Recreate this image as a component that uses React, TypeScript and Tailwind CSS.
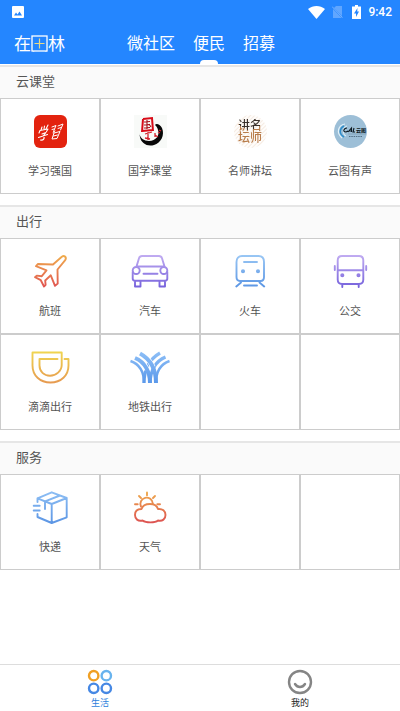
import type { ReactNode } from "react";

type Item = { label: string; icon: ReactNode };
type Section = { title: string; items: Item[] };

function LineIcon({ id, from, to, children }: { id: string; from: string; to: string; children: ReactNode }) {
  return (
    <svg
      viewBox="0 0 40 34"
      className="h-[34px] w-10"
      fill="none"
      stroke={`url(#${id})`}
      strokeWidth="1.9"
      strokeLinecap="round"
      strokeLinejoin="round"
      aria-hidden="true"
    >
      <defs>
        <linearGradient id={id} gradientUnits="userSpaceOnUse" x1="0" y1="0" x2="0" y2="34">
          <stop offset="0" stopColor={from} />
          <stop offset="1" stopColor={to} />
        </linearGradient>
      </defs>
      {children}
    </svg>
  );
}

const cjk = "'Noto Sans CJK SC', sans-serif";

const sections: Section[] = [
  {
    title: "云课堂",
    items: [
      {
        label: "学习强国",
        icon: (
          <svg viewBox="0 0 40 34" className="h-[34px] w-10" aria-hidden="true">
            <rect x="4" y="1" width="33" height="33" rx="6" fill="#e3230f" />
            <g fill="none" stroke="#fff" strokeLinecap="round" strokeLinejoin="round">
              <path strokeWidth="1.1" d="M12 13l-1 3M14.500 12l-.5 3M18 11l-2 4M9 19l1-2.500 8-1.500-1.500 2.500M12 20l4-1.500-2.500 3M8.500 23.500l9-3M13.500 21.500c1.500 3 0 5-3 4.500" />
              <path strokeWidth="1" d="M22 13l4-1.500-2.500 6M22 15.500l2-.5M28 12l5-2-2.500 6M28 14.500l3-1M25 17l-2 1.500M24 19l6-1.500-3 7-5 .5 2-6M23.500 22l4-1" />
            </g>
          </svg>
        ),
      },
      {
        label: "国学课堂",
        icon: (
          <svg viewBox="0 0 40 34" className="h-[34px] w-10" fill="none" aria-hidden="true">
            <rect x="4" y="1" width="33" height="33" fill="#f8faf8" />
            <path
              fill="#080808"
              d="M25 11c1-2 5-1 7 3 3 7-1 15-8 17-7 2-13-2-14-8l-1-4c1 5 5 8 10 8 7 0 11-6 9-11-.5-2-1.500-4-3-5z"
            />
            <path d="M13 5l9-1 1 13M13 5l-1 13M12 17l11-1" stroke="#d90b18" strokeWidth="2" />
            <path d="M14 8l6-.5M17 6v9M14 11l6-.5M14 14l6-.5M19 10l2 3" stroke="#a60d16" strokeWidth="1.100" />
            <path d="M15 20l7-2M18 18v8M15 24l5 1M25 21l3 2M25 19v4" stroke="#d3222d" strokeWidth="1.300" />
            <path d="M29 16l2 1M28 18l2 1" stroke="#d3222d" strokeWidth="1.200" />
          </svg>
        ),
      },
      {
        label: "名师讲坛",
        icon: (
          <span className="relative flex h-[34px] w-10 items-center justify-center text-[12px] leading-3 font-medium">
            <svg viewBox="0 0 40 34" className="absolute inset-0" aria-hidden="true">
              <defs>
                <pattern id="hatch" width="3" height="3" patternUnits="userSpaceOnUse" patternTransform="rotate(45)">
                  <path d="M0 0v3" stroke="#f1e4d8" strokeWidth="1.400" />
                </pattern>
              </defs>
              <circle cx="20.500" cy="17.500" r="16.500" fill="#fffdfb" />
              <circle cx="20.500" cy="17.500" r="16.500" fill="url(#hatch)" />
            </svg>
            {/* Two characters per line, with the upper right one inked darker */}
            <span className="relative w-[26px] bg-[conic-gradient(#39302b_60deg,#b97d4b_60deg_300deg,#39302b_300deg)] bg-clip-text text-center break-all text-transparent">
              讲名坛师
            </span>
          </span>
        ),
      },
      {
        label: "云图有声",
        icon: (
          <svg viewBox="0 0 40 34" className="h-[34px] w-10" fill="none" aria-hidden="true">
            <circle cx="20.500" cy="17.500" r="16.500" fill="#9dbfd7" />
            <path d="M15 10c-7 1-9 9-3 14" stroke="#e3f3fb" strokeWidth="1.200" />
            <path d="M14 12c-5 3-5 8 0 11" stroke="#2f8ecb" strokeWidth="1.500" />
            <path d="M17 12c-4 1-5 8-1 10" stroke="#d8edf8" strokeWidth="1.200" />
            <path d="M17 14c-3 0-5 4-1 4l2-1M18 18l3.500-4v4M19 17h2M24 14l-1 4h2" stroke="#0c1820" strokeWidth="1.100" />
            <text x="26" y="18" fontFamily={cjk} fontSize="5" fontWeight="700" fill="#0c1820">云图</text>
            <path d="M18 20h18" stroke="#7390a5" strokeWidth=".6" />
            <path d="M19 22.500h13" stroke="#537085" strokeWidth="1.200" strokeDasharray="1.500 .8" />
          </svg>
        ),
      },
    ],
  },
  {
    title: "出行",
    items: [
      {
        label: "航班",
        icon: (
          <LineIcon id="flight" from="#f0b04c" to="#e05252">
            <path d="M35 2.500c-1-.8-2.200-.5-3.200.2L23 10.500 8 10l-2 2.200 10.500 4.200-4.700 5.800-5-.6L5 23.200l5.800 3L14 32.500l1.600-1.600-.4-4.400 5.600-5.200L25 31.800l2.700-2.200-.2-14.100 7.700-9.300c.8-1.200.8-2.700-.2-3.700z" />
          </LineIcon>
        ),
      },
      {
        label: "汽车",
        icon: (
          <LineIcon id="car" from="#c3aef2" to="#7561dc">
            <path d="M6.500 12.500L9 4.200C9.500 2.700 10.300 2 12 2h17c1.700 0 2.500.7 3 2.200l2.500 8.300H6.500" />
            <circle cx="6.200" cy="16.500" r="3.500" />
            <circle cx="33.800" cy="16.500" r="3.500" />
            <path d="M2.700 18v6.500c0 1.500.8 2.200 2.300 2.200h30c1.500 0 2.300-.7 2.300-2.200V18M13.500 19.700h14M5 27v5.500h5.500V27M29.500 27v5.500H35V27" />
          </LineIcon>
        ),
      },
      {
        label: "火车",
        icon: (
          <LineIcon id="train" from="#9bc8f5" to="#5b95e4">
            <path d="M12 2h16.500c3.500 0 5.500 2.500 5.500 6v15c0 2.500-1 4-3.500 4H10c-2.500 0-3.500-1.500-3.500-4V8c0-3.500 2-6 5.500-6zM14 8h13M11 28.500L6.300 32.500M29.500 28.500l4.700 4M14 31.500h13" />
            <circle cx="13" cy="17.300" r="1.100" />
            <circle cx="28" cy="17.300" r="1.100" />
          </LineIcon>
        ),
      },
      {
        label: "公交",
        icon: (
          <LineIcon id="bus" from="#c3aef2" to="#7561dc">
            <path d="M12 2h17c3 0 4.300 1.500 4.300 4.500v19c0 3-1.300 4.500-4.300 4.500H12c-3 0-4.300-1.500-4.300-4.500v-19C7.700 3.500 9 2 12 2zM8 16.200h25M4.800 12v4M36.200 12v4M12.300 30.500V33M28.700 30.500V33" />
            <circle cx="12.300" cy="21.200" r="1.100" />
            <circle cx="28.500" cy="21.200" r="1.100" />
          </LineIcon>
        ),
      },
      {
        label: "滴滴出行",
        icon: (
          <LineIcon id="didi" from="#f0d850" to="#e69850">
            <path d="M27.500 9H9.500v6.500c0 6 4.500 10.200 10.500 10.200S31.700 21 31.700 15V2.500H2.500v13C2.500 25.500 10 32.500 20.500 32.500S38.500 25.500 38.500 15.500V9H34.500" />
          </LineIcon>
        ),
      },
      {
        label: "地铁出行",
        icon: (
          <LineIcon id="metro" from="#8fc0f7" to="#5a98ea">
            <g strokeLinecap="butt" strokeWidth="2.400">
              <path d="M39.500 11C31 14 26 22 26 33" />
              <path d="M35.500 7C26 11 20.500 20 20 33" strokeWidth="3.200" />
              <path d="M30 3C18 10 14 20 14 33" strokeWidth="3.200" />
              <path d="M10 3c11 6 16 17 16 30" stroke="#fff" strokeWidth="5.400" pathLength="10" strokeDasharray="5.500 5" />
              <path d="M5 8c10 4 15 14 15 25" stroke="#fff" strokeWidth="5.400" pathLength="10" strokeDasharray="5.500 5" />
              <path d="M10 3.500c11 6 16 16 16 29.500" strokeWidth="4" />
              <path d="M5 8c10 4 15 14 15 25" strokeWidth="4" />
              <path d="M.5 11C9 14 14 22 14 33" />
            </g>
          </LineIcon>
        ),
      },
    ],
  },
  {
    title: "服务",
    items: [
      {
        label: "快递",
        icon: (
          <LineIcon id="parcel" from="#8fc0f5" to="#5b95e4">
            <path d="M7.500 12V8.300l14.200-6 15 5.700v19.300L21.700 33 7.500 27v-3M7.500 8.300L21.700 14l15-6M21.700 14v19M15 19V11.300L30 5.500M3.700 15.700h6M3.700 20.500h6" />
          </LineIcon>
        ),
      },
      {
        label: "天气",
        icon: (
          <LineIcon id="weather" from="#f0b04c" to="#dc4f52">
            <path d="M11 16.500a6.200 6.200 0 1 1 11.800-3M17 2.500v2.700M9 6l2 2M25 6l-2 2M5 14.300h2.700M27.300 14.300H30" />
            <path d="M11.500 19c1-3.500 4-5 8.500-5 4.500 0 7 1.500 8 5 4.500-.5 7.500 2 7.500 6s-3 6.500-7.500 5.500c-3 2.500-12 2.500-15.500 0-4.500 1-7.500-1.500-7.500-5.500s2.500-6 6.500-6z" />
          </LineIcon>
        ),
      },
    ],
  },
];

function StatusBar() {
  return (
    <div className="flex h-6 items-center justify-between px-2">
      <svg viewBox="0 0 12 12" className="ml-1 size-3" aria-hidden="true">
        <rect width="12" height="12" rx="1" fill="#fff" />
        <path d="M2 9.500l2-3 1.500 2 2-3 2.500 4z" fill="#2486ff" />
      </svg>
      <div className="flex items-center">
        <svg viewBox="0 0 17 13" className="h-[13px] w-[17px]" aria-hidden="true">
          <path d="M8.500 13L0 3c5-4 12-4 17 0z" fill="#fff" />
        </svg>
        <svg viewBox="0 0 11 12" className="ml-[7px] h-3 w-[11px]" aria-hidden="true">
          <path d="M4 0h6v12H1V3z" fill="#60a6ff" />
          <path d="M0 1l11 11" stroke="#2486ff" strokeWidth="1.500" />
          <path d="M0 .5l10.500 11" stroke="#8bbeff" strokeWidth=".8" />
        </svg>
        <svg viewBox="0 0 9 14" className="ml-[9px] h-3.5 w-[9px]" aria-hidden="true">
          <path d="M3 0h3v1.500h3V14H0V1.500h3z" fill="#fff" />
          <path d="M5.500 3L2 8.500h2V12l3-5.500H5.200z" fill="#2486ff" />
        </svg>
        <span className="ml-[7px] font-[Roboto] text-[12px] leading-none font-medium">9:42</span>
      </div>
    </div>
  );
}

function Header() {
  return (
    <header className="bg-[#2486ff] text-white">
      <StatusBar />
      <div className="flex h-10 items-stretch">
        <h1 className="ml-[14px] flex w-[104px] items-center pb-0.5 text-[17px]">
          在
          <span className="relative">
            田
            <svg viewBox="0 0 17 17" className="absolute inset-0 m-auto size-[17px]" aria-hidden="true">
              <rect x="1" y="1" width="15" height="15" fill="#2486ff" stroke="#fff" strokeWidth="1.300" />
              <path d="M8.500 3.500v10M3.500 8.500h10" stroke="#e9d985" strokeWidth="1.200" />
            </svg>
          </span>
          林
        </h1>
        <nav className="flex">
          {["微社区", "便民", "招募"].map((tab) => (
            <button key={tab} className="flex flex-col items-center px-[9px] text-base">
              <span className="flex flex-1 items-center">{tab}</span>
              <span className={tab === "便民" ? "h-1 w-[18px] rounded-t-sm bg-white" : "h-1"} />
            </button>
          ))}
        </nav>
      </div>
    </header>
  );
}

function ServiceSection({ title, items }: Section) {
  // Pad the last row so the grid lines always reach the right edge
  const blanks = (4 - (items.length % 4)) % 4;
  return (
    <section>
      <h2 className="flex h-[33px] items-center border-t-2 border-[#e6e6e6] bg-[#fafafa] px-4 pb-1 text-[13px] text-[#555]">
        {title}
      </h2>
      <div className="grid grid-cols-4">
        {items.map((item) => (
          <a
            key={item.label}
            href="#"
            className="flex h-24 flex-col items-center gap-[14px] border border-[#ccc] pt-[15px] text-[11px] leading-4 text-[#555]"
          >
            {item.icon}
            {item.label}
          </a>
        ))}
        {Array.from({ length: blanks }, (_, i) => (
          <div key={i} className="h-24 border border-[#ccc]" />
        ))}
      </div>
    </section>
  );
}

export default function App() {
  return (
    <div className="flex min-h-screen flex-col bg-white font-['Noto_Sans_CJK_SC',sans-serif]">
      <Header />
      <main className="flex flex-1 flex-col gap-[11px] pt-px">
        {sections.map((section) => (
          <ServiceSection key={section.title} {...section} />
        ))}
      </main>
      <nav className="grid h-[47px] grid-cols-2 border-t border-[#ddd] text-[9px] leading-3">
        <button className="flex flex-col items-center pt-1 gap-0.5 text-[#2d7fdc]">
          <svg viewBox="0 0 26 26" className="size-[26px]" fill="none" strokeWidth="2.400" aria-hidden="true">
            <circle cx="6.700" cy="6.700" r="4.700" stroke="#f0a024" />
            <circle cx="19.300" cy="6.700" r="4.700" stroke="#68b3ee" />
            <circle cx="6.700" cy="19.300" r="4.700" stroke="#4688e4" />
            <circle cx="19.300" cy="19.300" r="4.700" stroke="#4688e4" />
          </svg>
          生活
        </button>
        <button className="flex flex-col items-center pt-1 gap-0.5 text-[#222]">
          <svg viewBox="0 0 26 26" className="size-[26px]" fill="none" stroke="#858585" strokeWidth="2.400" strokeLinecap="round" aria-hidden="true">
            <circle cx="13" cy="13" r="11" />
            <path d="M8 15c2.500 4 7.500 4 10 0" />
          </svg>
          我的
        </button>
      </nav>
    </div>
  );
}
